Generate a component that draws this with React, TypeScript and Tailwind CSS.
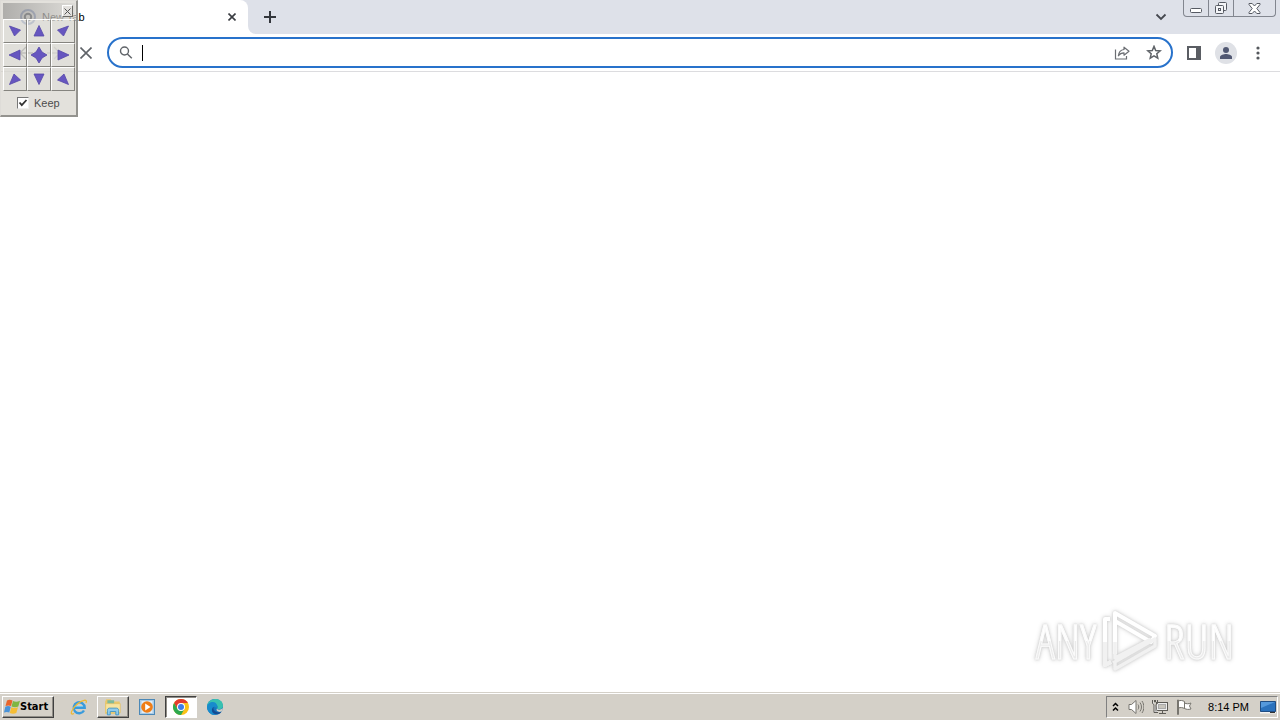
import React from "react";

const raised =
  "border border-t-white border-l-white border-r-[#6b6a66] border-b-[#6b6a66]";

function TabStrip() {
  return (
    <header className="flex h-[34px] bg-[#dee1e9]">
      <div className="flex w-[248px] items-center rounded-tr-lg bg-white pr-2 pl-5">
        <svg className="size-4" viewBox="0 0 16 16" fill="none" aria-hidden="true">
          <circle cx="8" cy="8" r="7" stroke="#5f79bd" strokeWidth="2" />
          <circle cx="8" cy="8" r="3.2" stroke="#10182c" strokeWidth="2" />
          <path d="M8 11v4" stroke="#5f79bd" strokeWidth="1.5" />
        </svg>
        <span className="ml-[6px] flex-1 text-[11px] text-black">New Tab</span>
        <button aria-label="Close tab" className="grid size-4 place-items-center">
          <svg className="size-2" viewBox="0 0 8 8" stroke="#3a3d42" strokeWidth="1.6" aria-hidden="true">
            <path d="M.5.5l7 7M7.5.5l-7 7" />
          </svg>
        </button>
      </div>
      <div className="w-2 bg-white">
        <div className="h-full rounded-bl-lg bg-[#dee1e9]" />
      </div>
      <button aria-label="New tab" className="grid w-7 place-items-center">
        <svg className="size-3" viewBox="0 0 12 12" stroke="#33363c" strokeWidth="2" aria-hidden="true">
          <path d="M6 0v12M0 6h12" />
        </svg>
      </button>
      <div className="flex-1" />
      <button aria-label="Search tabs" className="mr-[10px] grid w-6 place-items-center">
        <svg className="size-3" viewBox="0 0 12 12" fill="none" stroke="#45484f" strokeWidth="1.8" aria-hidden="true">
          <path d="M1.5 3.5L6 8l4.500-4.500" />
        </svg>
      </button>
      <div className="mr-1 flex h-[17px] w-[93px] rounded-b border border-t-0 border-[#82868f] text-[#565a63]">
        <button aria-label="Minimize" className="grid w-[25px] place-items-center border-r border-[#82868f]">
          <svg className="h-4 w-3" viewBox="0 0 12 16" aria-hidden="true">
            <rect x=".5" y="8.500" width="11" height="4" rx="1" fill="#fff" stroke="currentColor" />
          </svg>
        </button>
        <button aria-label="Restore" className="grid w-[25px] place-items-center border-r border-[#82868f]">
          <svg className="h-4 w-[14px]" viewBox="0 0 14 16" fill="#f4f5f8" stroke="currentColor" aria-hidden="true">
            <rect x="4.500" y="2.500" width="8" height="8" rx="1" />
            <rect x="1.500" y="5.500" width="8" height="8" rx="1" />
            <rect x="4.500" y="8.500" width="2" height="2" />
          </svg>
        </button>
        <button aria-label="Close window" className="grid flex-1 place-items-center">
          <svg className="h-[11px] w-[13px]" viewBox="0 0 13 11" fill="#fff" stroke="currentColor" aria-hidden="true">
            <path d="M1 .5h3.200L6.500 3 8.800.5H12v1L8.800 5.500 12 9.500v1H8.800L6.500 8l-2.300 2.500H1v-1l3.200-4L1 1.500z" />
          </svg>
        </button>
      </div>
    </header>
  );
}

function Toolbar() {
  return (
    <div className="flex h-[38px] items-center border-b border-[#dcdcdf] bg-white pr-[13px] pl-3">
      <button aria-label="Back" className="grid w-7 place-items-center">
        <svg className="size-4" viewBox="0 0 16 16" fill="none" stroke="#5f6368" strokeWidth="1.4" aria-hidden="true">
          <path d="M15 8H2M8 2L2 8l6 6" />
        </svg>
      </button>
      <button aria-label="Forward" className="grid w-7 place-items-center">
        <svg className="size-4" viewBox="0 0 16 16" fill="none" stroke="#babcbe" strokeWidth="1.4" aria-hidden="true">
          <path d="M1 8h13M8 2l6 6-6 6" />
        </svg>
      </button>
      <button aria-label="Stop loading" className="ml-1 grid w-7 place-items-center">
        <svg className="size-3" viewBox="0 0 12 12" stroke="#5f6368" strokeWidth="1.6" aria-hidden="true">
          <path d="M.5.500l11 11M11.500.500l-11 11" />
        </svg>
      </button>
      <label className="ml-[7px] flex h-[31px] flex-1 items-center rounded-full border-2 border-[#2872cb] bg-white pr-[6px] pl-[10px]">
        <svg className="size-[14px]" viewBox="0 0 14 14" fill="none" stroke="#5f6368" strokeWidth="1.400" aria-hidden="true">
          <circle cx="5.500" cy="5" r="4" />
          <path d="M8.400 7.900l4.400 4.400" />
        </svg>
        <span className="ml-[9px] h-4 w-px bg-black" />
        <input aria-label="Address and search bar" className="min-w-0 flex-1 bg-transparent text-sm outline-none" />
        <button aria-label="Share this page" className="grid w-6 place-items-center">
          <svg className="size-4" viewBox="0 0 16 16" fill="none" stroke="#6b6e73" strokeWidth="1.2" aria-hidden="true">
            <path d="M1.500 4.500v9.500h11v-3" />
            <path d="M10 2.200l5 4-5 4V7.800c-2.500 0-4.200.8-5.600 3C4.700 7.500 6.500 5 10 4.500z" strokeLinejoin="round" />
          </svg>
        </button>
        <button aria-label="Bookmark this tab" className="ml-2 grid w-[23px] place-items-center">
          <svg className="size-4" viewBox="0 0 16 16" fill="none" stroke="#5f6368" strokeWidth="1.500" aria-hidden="true">
            <path d="M8 1.400l1.700 4.100 4.500.4-3.400 2.900 1 4.400L8 10.900l-3.800 2.300 1-4.400-3.400-2.900 4.500-.4z" />
          </svg>
        </button>
      </label>
      <button aria-label="Side panel" className="ml-2 grid w-[26px] place-items-center">
        <svg className="size-[14px]" viewBox="0 0 14 14" aria-hidden="true">
          <path d="M1 1h12v12H1z" fill="none" stroke="#5a5d63" strokeWidth="2" />
          <path d="M9 1h4v12H9z" fill="#5a5d63" />
        </svg>
      </button>
      <button aria-label="Profile" className="ml-2 grid size-[22px] place-items-center rounded-full bg-[#dfe1e6]">
        <svg className="size-[14px]" viewBox="0 0 14 14" fill="#515872" aria-hidden="true">
          <circle cx="7" cy="4" r="3" />
          <path d="M1 13v-2c0-2 4-3 6-3s6 1 6 3v2z" />
        </svg>
      </button>
      <button aria-label="Browser menu" className="ml-3 grid w-[18px] place-items-center">
        <svg className="h-4 w-1" viewBox="0 0 4 16" fill="#55585d" aria-hidden="true">
          <circle cx="2" cy="3" r="1.600" />
          <circle cx="2" cy="8" r="1.600" />
          <circle cx="2" cy="13" r="1.600" />
        </svg>
      </button>
    </div>
  );
}

const directions = [
  { name: "Top left", d: "M1.500 2L12.500 6 6.500 12z" },
  { name: "Top", d: "M7 1.500L12 12H2z" },
  { name: "Top right", d: "M12.500 2L1.500 6l6 6z" },
  { name: "Left", d: "M1 7L12 2v10z" },
  { name: "Center", d: "M7-1L10 4 15 7 10 10 7 15 4 10-1 7 4 4z" },
  { name: "Right", d: "M13 7L2 2v10z" },
  { name: "Bottom left", d: "M1.500 12.500L12.500 8 6 2z" },
  { name: "Bottom", d: "M7 12.500L12 2H2z" },
  { name: "Bottom right", d: "M12.500 12.500L8 2 1.500 8z" },
];

function PositionPalette() {
  return (
    <section
      aria-label="Window position"
      className="absolute top-0 left-0 flex h-[117px] w-[78px] flex-col border-t border-r-2 border-b-2 border-l border-t-[#dedcd8] border-r-[#94938f] border-b-[#94938f] border-l-[#dedcd8] bg-[#d4d1ca]/65 pt-0.5 pl-0.5"
    >
      <div className="flex h-4 w-[72px] justify-end bg-linear-to-r from-[#707070]/45 to-[#c4c4c4]/20 pt-0.5 pr-0.5">
        <button aria-label="Close palette" className={`grid h-3 w-[11px] place-items-center bg-[#e3e1de] ${raised}`}>
          <svg className="size-[7px]" viewBox="0 0 7 7" stroke="#555" aria-hidden="true">
            <path d="M.5.500l6 6M6.500.500l-6 6" />
          </svg>
        </button>
      </div>
      <div className="grid w-[72px] grid-cols-3">
        {directions.map(({ name, d }) => (
          <button
            key={name}
            aria-label={name}
            className="grid size-6 place-items-center border border-t-white border-r-[#85847f] border-b-[#85847f] border-l-white bg-[#dddbd7]/40"
          >
            <svg className="size-[14px] overflow-visible" viewBox="0 0 14 14" fill="#6656c0" stroke="#5547a8" strokeWidth=".8" aria-hidden="true">
              <path d={d} />
            </svg>
          </button>
        ))}
      </div>
      <label className="flex flex-1 items-center gap-[5px] pl-[14px] text-[11px] text-[#4c4c4c]">
        <span className="grid size-3">
          <input
            type="checkbox"
            defaultChecked
            className="peer col-start-1 row-start-1 size-3 appearance-none border border-t-[#777] border-r-[#eee] border-b-[#eee] border-l-[#777] bg-white"
          />
          <svg
            className="pointer-events-none invisible col-start-1 row-start-1 size-3 peer-checked:visible"
            viewBox="0 0 12 12"
            fill="none"
            stroke="#333"
            strokeWidth="1.800"
            aria-hidden="true"
          >
            <path d="M2.500 5.500l2.300 2.700L9.500 3" />
          </svg>
        </span>
        Keep
      </label>
    </section>
  );
}

function Watermark() {
  const word =
    "bg-linear-to-b from-white from-50% to-[#ebebeb] to-50% bg-clip-text text-transparent [-webkit-text-stroke:1px_#fbfbfb]";
  return (
    <div className="mr-[46px] mb-5 flex items-center text-[48px] leading-[62px] [font-family:'Open_Sans_Condensed_Light','Open_Sans_Condensed','Roboto_Condensed','Liberation_Sans',sans-serif] [filter:drop-shadow(0_0_1px_#d0d0d0)_drop-shadow(0_0_2px_#d8d8d8)]">
      <span className={word}>ANY</span>
      <svg className="mx-1 h-[62px] w-[60px]" viewBox="0 0 58 62" fill="none" stroke="#fff" strokeWidth="4" strokeLinejoin="round" aria-hidden="true">
        <path d="M9 9H4v46l6-3" />
        <path d="M4 32v23l6-3" stroke="#f1f1f1" />
        <path d="M14 44V3L54 26l-4 6L14 11" />
        <path d="M14 32v16L50 29M14 53v6L54 36v-7L12 53" stroke="#f1f1f1" strokeWidth="3.500" />
      </svg>
      <span className={word}>RUN</span>
    </div>
  );
}

function StartFlag() {
  return (
    <svg className="size-4" viewBox="0 0 16 16" aria-hidden="true">
      <path d="M3 1.500c2-1 3.500-.8 5.500 0L7 7c-1.500-.8-3.500-.8-5.500 0z" fill="#e8642b" />
      <path d="M9 2c2 1 4.500 1 7-.2L14.300 7.500c-2 1-4.500 1-6.800 0z" fill="#7fb642" />
      <path d="M1.300 7.700c2-.9 3.700-.9 5.500 0L5.300 13.500c-1.500-.8-3.500-.8-5.300 0z" fill="#4a93d8" />
      <path d="M7.300 8.200c2 1 4.500 1 6.700 0l-1.700 5.800c-2 1-4.500 1-6.500 0z" fill="#f5bd35" />
    </svg>
  );
}

function Taskbar() {
  return (
    <footer className="flex h-7 items-center border-t border-[#d4d0c8] bg-[#d4d0c8] shadow-[inset_0_1px_0_#fff]">
      <button className="ml-0.5 flex h-[22px] w-[52px] items-center border border-t-white border-r-[#404040] border-b-[#404040] border-l-white pl-px text-[11px] font-bold text-black shadow-[inset_-1px_-1px_0_#908d87] [font-family:'DejaVu_Sans_Condensed','DejaVu_Sans',sans-serif]">
        <StartFlag />
        <span className="pt-0.5">Start</span>
      </button>
      <nav aria-label="Taskbar" className="ml-[9px] flex items-center gap-0.5">
        <button aria-label="Internet Explorer" className="grid h-[22px] w-8 place-items-center">
          <svg className="size-[18px]" viewBox="0 0 18 18" fill="none" aria-hidden="true">
            <path d="M14 12.500A5.500 5.500 0 1 1 14.700 9.700H5" stroke="#3a9bdc" strokeWidth="2.400" />
            <path d="M5 8.500h8" stroke="#6cc6f3" strokeWidth="1" />
            <path d="M4 15.500c-5 2.500-2.500-4.500 3-9.200C12 2 18 .5 16 5" stroke="#edb934" strokeWidth="1.300" />
          </svg>
        </button>
        <button aria-label="File Explorer" className="grid h-[22px] w-8 place-items-center border border-t-white border-r-[#404040] border-b-[#404040] border-l-white shadow-[inset_-1px_-1px_0_#908d87]">
          <svg className="size-[18px]" viewBox="0 0 16 16" aria-hidden="true">
            <path d="M1 3l1-2h4l1 2h7v11H1z" fill="#e9c768" />
            <path d="M3 2h6v9H3z" fill="#7eb99b" />
            <path d="M1.500 5H14.500v8h-13z" fill="#f7e4a0" stroke="#dfbd64" strokeWidth=".6" />
            <path d="M3 15v-4c0-1.500 1-2 2-2h6c1 0 2 .5 2 2v4h-2.500v-3h-5v3z" fill="#8fcbed" stroke="#3e93c4" strokeWidth=".8" />
          </svg>
        </button>
        <button aria-label="Media Player" className="grid h-[22px] w-8 place-items-center">
          <svg className="size-4" viewBox="0 0 16 16" aria-hidden="true">
            <rect x=".5" y=".5" width="15" height="15" fill="#a9cbe6" stroke="#4b88b7" />
            <rect x="2.500" y="2" width="11" height="12" fill="#e0edf7" />
            <circle cx="8" cy="8" r="5.800" fill="#ef7d16" />
            <path d="M6.200 4.500L11.500 8l-5.300 3.500z" fill="#fff" />
          </svg>
        </button>
        <button aria-label="Google Chrome" className="grid h-[22px] w-8 place-items-center border border-t-[#404040] border-r-white border-b-white border-l-[#404040] bg-white shadow-[inset_1px_1px_0_#908d87]">
          <svg className="size-4" viewBox="0 0 16 16" aria-hidden="true">
            <circle cx="8" cy="8" r="8" fill="#fbc116" />
            <path d="M8 8L4.500 10 1.070 4A8 8 0 0 1 14.930 4H8z" fill="#e33b2e" />
            <path d="M1.070 4L4.530 10 8 12l0 4A8 8 0 0 1 1.070 4z" fill="#2da94f" />
            <path d="M8 16l3.460-6H4.530L8 12z" fill="#2da94f" />
            <circle cx="8" cy="8" r="4" fill="#fff" />
            <circle cx="8" cy="8" r="3" fill="#3f7de8" />
          </svg>
        </button>
        <button aria-label="Microsoft Edge" className="grid h-[22px] w-8 place-items-center">
          <svg className="size-4" viewBox="0 0 16 16" aria-hidden="true">
            <circle cx="8" cy="8" r="8" fill="#1675bd" />
            <path d="M0 8C0-2 16-3 16 7c0 3-4 4-6 2.700 2-3-1-5.200-4-5.200S1 6 0 8z" fill="#38c1b0" />
            <path d="M0 8c.5-6 10-7 10-1 0 1-.5 1.500-.5 2.500C8 7 5.500 7.500 5 10c-.4 2.500 1.500 5 4 6-5 .5-9-3.500-9-8z" fill="#188bcc" />
            <path d="M6.800 8c-1.500 3 2 6.500 7.500 5-2 3-7 3-9 0-1-2 0-4.500 1.500-5z" fill="#154b92" />
            <path d="M9.700 9.800c1.800 1.500 4.500 1 6-.8.3 2-1 3.500-2 3.800-3 .5-4.700-1.200-4-3z" fill="#d4d0c8" />
          </svg>
        </button>
      </nav>
      <div className="flex-1" />
      <div className="mr-0.5 flex h-[22px] items-center border border-t-[#808080] border-r-white border-b-white border-l-[#808080] text-[11px] text-black">
        <button aria-label="Show hidden icons" className="grid w-[17px] place-items-center">
          <svg className="h-[10px] w-[7px]" viewBox="0 0 7 10" fill="none" stroke="#000" strokeWidth="1.500" aria-hidden="true">
            <path d="M1 4l2.500-2.500L6 4M1 8.500L3.500 6 6 8.500" />
          </svg>
        </button>
        <button aria-label="Volume" className="ml-0.5 grid w-5 place-items-center">
          <svg className="size-4" viewBox="0 0 16 16" fill="none" stroke="#77756f" aria-hidden="true">
            <path d="M1 5.500h2.500L8 1.500v13l-4.500-4H1z" fill="#fff" />
            <path d="M10 5.500c1 1.500 1 3.500 0 5M12 3.500c2 3 2 6 0 9M14 2c2.500 4 2.500 8 0 12" />
          </svg>
        </button>
        <button aria-label="Network" className="ml-1 grid w-5 place-items-center">
          <svg className="size-4" viewBox="0 0 16 16" fill="#eee" stroke="#5d5b56" aria-hidden="true">
            <rect x="4.500" y="3.500" width="11" height="8" />
            <rect x="6.500" y="5.500" width="7" height="4" fill="#c8c5bd" stroke="#aaa" />
            <path d="M7 14.500h7M10.500 12v2" />
            <path d="M.5 1v3.500l1.500 1v8h4M5.500 1v3.500L4 5.500v7M2.500 1v2h1V1" />
          </svg>
        </button>
        <button aria-label="Action Center" className="ml-1 grid w-5 place-items-center">
          <svg className="size-4" viewBox="0 0 16 16" fill="#fff" stroke="#77756f" aria-hidden="true">
            <path d="M1.500 1v14.500h1V1z" />
            <path d="M2.500 2c2-1 4-.5 6 .5v7c-2-1-4-1.300-6-.5zM8.500 4c2 1 4 1 6.500 0l-1.500 3 1.500 3c-2.500.7-4.500.5-6.500-.5z" />
          </svg>
        </button>
        <time className="ml-[14px] w-[41px] pt-px text-center whitespace-nowrap">8:14 PM</time>
        <button aria-label="Show desktop" className="ml-[10px] grid w-[18px] place-items-center">
          <svg className="size-4" viewBox="0 0 16 16" aria-hidden="true">
            <path d="M.5 2.500h15v10H.5z" fill="#2b72bd" stroke="#204d83" />
            <path d="M1 3h14L1 9z" fill="#5599dc" />
            <path d="M0 13h16v1.500H0z" fill="#f3f3f3" />
            <path d="M10 13h5v1h-5z" fill="#333" />
          </svg>
        </button>
      </div>
    </footer>
  );
}

export default function App() {
  return (
    <div className="relative flex min-h-screen flex-col bg-white [font-family:'Liberation_Sans',Arial,sans-serif]">
      <TabStrip />
      <Toolbar />
      <main className="flex flex-1 items-end justify-end">
        <Watermark />
      </main>
      <Taskbar />
      <PositionPalette />
    </div>
  );
}
